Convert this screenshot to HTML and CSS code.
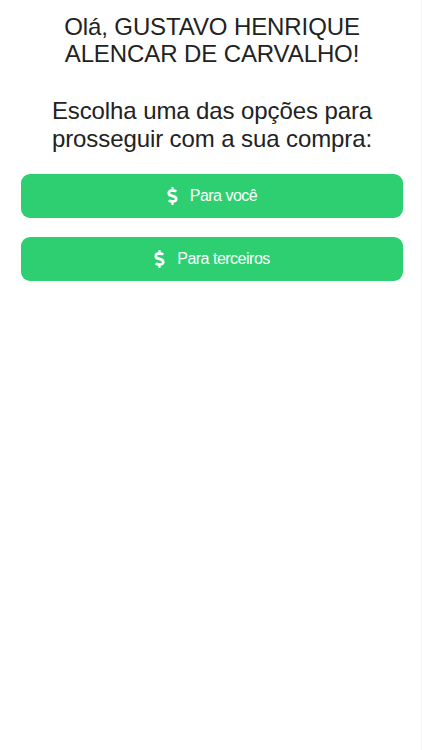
FILE: index.html
```html
<html lang="pt-BR">
	<head>
		<meta charset="UTF-8">
		<meta name="viewport" content="width=device-width, initial-scale=1">
		<title>Escolha uma opção</title>
		<link rel="stylesheet" href="styles.css">
	</head>
	<body>
		<main class="page">
			<h1 class="greeting">Olá, GUSTAVO HENRIQUE ALENCAR DE CARVALHO!</h1>
			<p class="prompt">Escolha uma das opções para prosseguir com a sua compra:</p>

			<div class="options">
				<a class="option" href="#">
					<svg class="icon" viewBox="0 0 288 512" aria-hidden="true"><path d="M209.2 233.4l-108-31.6C88.7 198.2 80 186.5 80 173.5c0-16.3 13.2-29.5 29.5-29.5h66.3c12.2 0 24.2 3.7 34.2 10.5 6.1 4.1 14.3 3.1 19.5-2l34.8-34c7.1-6.9 6.1-18.4-1.8-24.5C238 74.8 207.4 64.1 176 64V16c0-8.8-7.2-16-16-16h-32c-8.8 0-16 7.2-16 16v48h-2.5C45.8 64-5.4 118.7.5 183.6c4.2 46.1 39.4 83.6 83.8 96.6l102.5 30c12.5 3.7 21.2 15.3 21.2 28.3 0 16.3-13.2 29.5-29.5 29.5h-66.3C100 368 88 364.3 78 357.5c-6.1-4.1-14.3-3.1-19.5 2l-34.8 34c-7.1 6.9-6.1 18.4 1.8 24.5 24.5 19.2 55.1 29.9 86.5 30v48c0 8.8 7.2 16 16 16h32c8.8 0 16-7.2 16-16v-48.2c46.6-.9 90.3-28.6 105.7-72.7 21.5-61.6-14.6-124.8-72.5-141.7z"/></svg>
					<span>Para você</span>
				</a>
				<a class="option" href="#">
					<svg class="icon" viewBox="0 0 288 512" aria-hidden="true"><path d="M209.2 233.4l-108-31.6C88.7 198.2 80 186.5 80 173.5c0-16.3 13.2-29.5 29.5-29.5h66.3c12.2 0 24.2 3.7 34.2 10.5 6.1 4.1 14.3 3.1 19.5-2l34.8-34c7.1-6.9 6.1-18.4-1.8-24.5C238 74.8 207.4 64.1 176 64V16c0-8.8-7.2-16-16-16h-32c-8.8 0-16 7.2-16 16v48h-2.5C45.8 64-5.4 118.7.5 183.6c4.2 46.1 39.4 83.6 83.8 96.6l102.5 30c12.5 3.7 21.2 15.3 21.2 28.3 0 16.3-13.2 29.5-29.5 29.5h-66.3C100 368 88 364.3 78 357.5c-6.1-4.1-14.3-3.1-19.5 2l-34.8 34c-7.1 6.9-6.1 18.4 1.8 24.5 24.5 19.2 55.1 29.9 86.5 30v48c0 8.8 7.2 16 16 16h32c8.8 0 16-7.2 16-16v-48.2c46.6-.9 90.3-28.6 105.7-72.7 21.5-61.6-14.6-124.8-72.5-141.7z"/></svg>
					<span>Para terceiros</span>
				</a>
			</div>
		</main>
	</body>
</html>
```

FILE: styles.css
```css
html {
	background: #f6f6f6;
}
body {
	margin: 0;
	width: 421px;
	min-height: 750px;
	background: #fff;
	font-family: "Liberation Sans", Arial, sans-serif;
	color: #222;
}
.page {
	padding: 13px 18px 0 21px;
}
.greeting,
.prompt {
	margin: 0 auto;
	max-width: 320px;
	font-size: 24px;
	font-weight: normal;
	line-height: 27px;
	letter-spacing: -.1px;
	text-align: center;
}
.prompt {
	margin-top: 30px;
	max-width: 340px;
	line-height: 28px;
}
.options {
	display: flex;
	flex-direction: column;
	gap: 19px;
	margin-top: 21px;
}
.option {
	display: flex;
	align-items: center;
	justify-content: center;
	gap: 12px;
	height: 44px;
	border-radius: 9px;
	background: #2ecf71;
	color: #fff;
	font-size: 16px;
	letter-spacing: -.5px;
	text-decoration: none;
}
.icon {
	width: 11px;
	height: 18px;
	fill: #fff;
}
```
